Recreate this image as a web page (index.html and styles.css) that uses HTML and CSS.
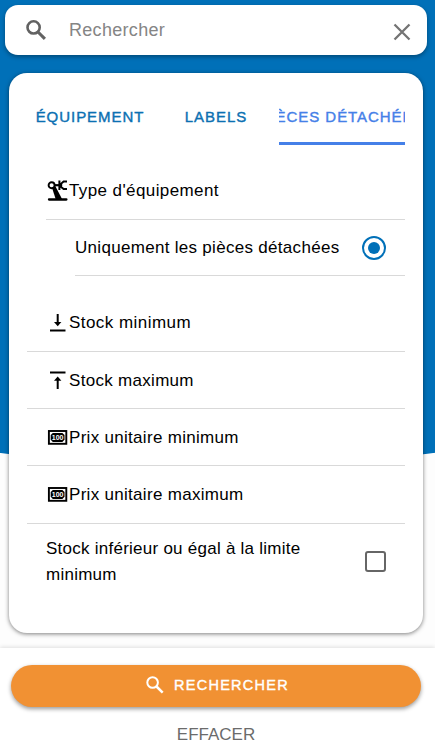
FILE: index.html
```html
<!DOCTYPE html>
<html lang="fr">
<head>
  <meta charset="UTF-8">
  <meta name="viewport" content="width=device-width, initial-scale=1.0">
  <title>Rechercher</title>
  <link rel="stylesheet" href="styles.css">
</head>
<body>

  <div class="page">
    <header class="searchbar">
      <svg class="search-icon" width="20" height="20" viewBox="0 0 20 20">
        <circle cx="7.6" cy="7.4" r="6.1" fill="none" stroke="#626262" stroke-width="2.6"/>
        <path d="M12 12 L18.9 18.8" stroke="#626262" stroke-width="3.1"/>
      </svg>
      <input class="search-input" type="text" placeholder="Rechercher">
      <svg class="clear-icon" width="18" height="18" viewBox="0 0 18 18">
        <path d="M1.5 1.5 L16.5 16.5 M16.5 1.5 L1.5 16.5" stroke="#747474" stroke-width="2.3"/>
      </svg>
    </header>

    <main class="card">
      <nav class="tabs">
        <a class="tab">ÉQUIPEMENT</a>
        <a class="tab">LABELS</a>
        <a class="tab active"><span>PIÈCES DÉTACHÉES</span></a>
      </nav>

      <div class="row type">
        <svg class="row-icon" width="23" height="22" viewBox="0 0 23 22">
          <path d="M3 19.5 H20.4" stroke="#000" stroke-width="2.3" stroke-linecap="round"/>
          <path d="M6.2 8.2 L9.4 6.2 L16.3 19.5 H9.8 Z" fill="#000"/>
          <circle cx="5.6" cy="5.2" r="3" fill="#fff" stroke="#000" stroke-width="1.9"/>
          <path d="M8.5 5.2 H15" stroke="#000" stroke-width="2.2"/>
          <path d="M21 1.4 H17.6 L15.2 3.6 V7 L17.6 9 H21 M13.4 0.4 V10" fill="none" stroke="#000" stroke-width="2"/>
        </svg>
        <span>Type d'équipement</span>
      </div>

      <label class="row option">
        <span>Uniquement les pièces détachées</span>
        <span class="radio"></span>
      </label>

      <div class="row first">
        <svg class="row-icon" width="23" height="22" viewBox="0 0 23 22">
          <path d="M4 18.5 H19.5" stroke="#000" stroke-width="2"/>
          <path d="M11.7 2 V10.5" stroke="#000" stroke-width="2"/>
          <path d="M8 10 H15.4 L11.7 14.2 Z" fill="#000"/>
        </svg>
        <span>Stock minimum</span>
      </div>

      <div class="row">
        <svg class="row-icon" width="23" height="22" viewBox="0 0 23 22">
          <path d="M4 2.5 H19.5" stroke="#000" stroke-width="2"/>
          <path d="M11.7 10 V19" stroke="#000" stroke-width="2"/>
          <path d="M8 10.7 H15.4 L11.7 6.4 Z" fill="#000"/>
        </svg>
        <span>Stock maximum</span>
      </div>

      <div class="row">
        <svg class="row-icon" width="23" height="22" viewBox="0 0 23 22">
          <rect x="2.9" y="4" width="17.4" height="12.8" fill="#fff" stroke="#000" stroke-width="1.9"/>
          <path d="M6.8 5.9 H16.4 L18.5 8 V12.8 L16.4 14.9 H6.8 L4.7 12.8 V8 Z" fill="#000"/>
          <text class="note-value" x="11.6" y="12.8" text-anchor="middle">100</text>
        </svg>
        <span>Prix unitaire minimum</span>
      </div>

      <div class="row">
        <svg class="row-icon" width="23" height="22" viewBox="0 0 23 22">
          <rect x="2.9" y="4" width="17.4" height="12.8" fill="#fff" stroke="#000" stroke-width="1.9"/>
          <path d="M6.8 5.9 H16.4 L18.5 8 V12.8 L16.4 14.9 H6.8 L4.7 12.8 V8 Z" fill="#000"/>
          <text class="note-value" x="11.6" y="12.8" text-anchor="middle">100</text>
        </svg>
        <span>Prix unitaire maximum</span>
      </div>

      <label class="limit">
        <span class="limit-text">Stock inférieur ou égal à la limite minimum</span>
        <span class="checkbox"></span>
      </label>
    </main>

    <footer class="footer">
      <button class="search-btn">
        <svg width="18" height="18" viewBox="0 0 18 18">
          <circle cx="6.6" cy="6.5" r="5.3" fill="none" stroke="#fff" stroke-width="2"/>
          <path d="M10.5 10.5 L16.7 16.7" stroke="#fff" stroke-width="2.5"/>
        </svg>
        <span>RECHERCHER</span>
      </button>
      <button class="clear-btn">EFFACER</button>
    </footer>
  </div>

</body>
</html>
```

FILE: styles.css
```css
* {
  margin: 0;
  padding: 0;
  box-sizing: border-box;
}

body {
  font-family: "Liberation Sans", Arial, sans-serif;
  font-size: 17px;
  letter-spacing: 0.3px;
  color: #000;
  background: #fdfdfd;
}

.page {
  display: flex;
  flex-direction: column;
  height: 752px;
  padding-top: 5px;
  overflow: hidden;
  background: radial-gradient(ellipse 900px 461px at 217px 6px, #0070b8 99.8%, #fdfdfd 100%);
}

/* Search bar */
.searchbar {
  display: flex;
  align-items: center;
  height: 50px;
  margin: 0 8px 0 5px;
  padding: 0 16px 0 21px;
  background: #fff;
  border-radius: 13px;
  box-shadow: 0 2px 4px rgba(0, 0, 0, 0.35);
}

.search-input {
  flex: 1;
  min-width: 0;
  margin-left: 23px;
  border: none;
  outline: none;
  background: none;
  font: inherit;
  font-size: 18px;
  letter-spacing: 0.3px;
}

.search-input::placeholder {
  color: #858585;
}

.clear-icon {
  margin-top: 4px;
}

/* Card */
.card {
  height: 560px;
  margin: 18px 12px 0 9px;
  padding: 14px 18px 0 18px;
  background: #fff;
  border-radius: 18px;
  box-shadow: 0 1px 4px rgba(0, 0, 0, 0.5);
}

.tabs {
  display: grid;
  grid-template-columns: repeat(3, 126px);
  height: 58px;
}

.tab {
  display: flex;
  align-items: center;
  justify-content: center;
  overflow: hidden;
  white-space: nowrap;
  font-size: 15px;
  letter-spacing: 0.95px;
  color: #0b70b2;
  -webkit-text-stroke: 0.4px currentColor;
}

.tab.active {
  padding-top: 3px;
  color: #4580e8;
  border-bottom: 3px solid #4580e8;
}

.row {
  display: flex;
  align-items: center;
  height: 57.4px;
  padding: 2px 0 0 19px;
  border-bottom: 1px solid #d9d9d9;
}

.row-icon {
  flex: none;
}

.row.type {
  height: 74.5px;
  margin-left: 19px;
  padding: 19px 0 0;
  letter-spacing: 0.4px;
}

.row.option {
  justify-content: space-between;
  height: 56px;
  margin-left: 48px;
  padding: 1px 19px 0 0;
}

.row.first {
  height: 76px;
  padding-top: 20px;
  letter-spacing: 0.45px;
}

.note-value {
  font-size: 7px;
  font-weight: bold;
  letter-spacing: 0;
  fill: #fff;
}

.radio {
  display: flex;
  align-items: center;
  justify-content: center;
  width: 24px;
  height: 24px;
  border: 2px solid #0070b8;
  border-radius: 50%;
}

.radio::before {
  content: "";
  width: 12px;
  height: 12px;
  border-radius: 50%;
  background: #0070b8;
}

.limit {
  display: flex;
  align-items: center;
  justify-content: space-between;
  height: 76px;
  padding: 0 19px;
}

.limit-text {
  width: 280px;
  line-height: 26px;
  letter-spacing: 0.25px;
}

.checkbox {
  width: 21px;
  height: 21px;
  border: 2px solid #666;
  border-radius: 3px;
}

/* Footer */
.footer {
  display: flex;
  flex-direction: column;
  align-items: center;
  flex: 1;
  margin-top: 15px;
  padding: 17px 14px 0 11px;
  background: #fff;
  box-shadow: 0 -1px 4px rgba(0, 0, 0, 0.12);
}

.search-btn {
  display: flex;
  align-items: center;
  justify-content: center;
  gap: 10px;
  flex: none;
  width: 100%;
  height: 42px;
  padding: 0 0 2px 3px;
  border: none;
  border-radius: 21px;
  background: #f19133;
  box-shadow: 0 2px 4px rgba(0, 0, 0, 0.4);
  font: inherit;
  font-size: 14.5px;
  letter-spacing: 1.25px;
  color: #fff;
  -webkit-text-stroke: 0.4px #fff;
}

.clear-btn {
  margin-top: 18px;
  border: none;
  background: none;
  font: inherit;
  letter-spacing: 0;
  color: #6b6b6b;
}
```
